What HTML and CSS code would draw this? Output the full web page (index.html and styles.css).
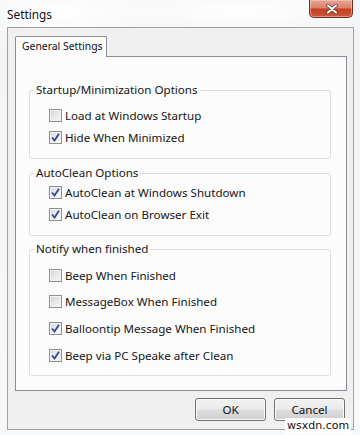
FILE: index.html
```html
<!DOCTYPE html>
<html>
<head>
<meta charset="utf-8">
<link rel="stylesheet" href="styles.css">
</head>
<body>
<div class="window">
  <div class="titlebar">
    <span class="title">Settings</span>
    <div class="close">
      <svg width="12" height="10" viewBox="0 0 12 10">
        <path d="M2 1.5 L10 8.5 M10 1.5 L2 8.5" stroke="#5a3a36" stroke-width="3.6" stroke-linecap="round" fill="none"/>
        <path d="M2 1.5 L10 8.5 M10 1.5 L2 8.5" stroke="#ffffff" stroke-width="2" stroke-linecap="round" fill="none"/>
      </svg>
    </div>
  </div>
  <div class="client">
    <div class="tabs">
      <div class="tab-strip"><div class="tab active">General Settings</div></div>
      <div class="tab-page">
        <fieldset class="group g1">
          <legend>Startup/Minimization Options</legend>
          <label class="row"><span class="cb"></span>Load at Windows Startup</label>
          <label class="row"><span class="cb checked"><svg width="11" height="11" viewBox="0 0 11 11"><path d="M2 5.5 L4.5 8.5 L9 1.8" stroke="#34468a" stroke-width="1.8" fill="none"/></svg></span>Hide When Minimized</label>
        </fieldset>
        <fieldset class="group g2">
          <legend>AutoClean Options</legend>
          <label class="row"><span class="cb checked"><svg width="11" height="11" viewBox="0 0 11 11"><path d="M2 5.5 L4.5 8.5 L9 1.8" stroke="#34468a" stroke-width="1.8" fill="none"/></svg></span>AutoClean at Windows Shutdown</label>
          <label class="row"><span class="cb checked"><svg width="11" height="11" viewBox="0 0 11 11"><path d="M2 5.5 L4.5 8.5 L9 1.8" stroke="#34468a" stroke-width="1.8" fill="none"/></svg></span>AutoClean on Browser Exit</label>
        </fieldset>
        <fieldset class="group g3">
          <legend>Notify when finished</legend>
          <label class="row"><span class="cb"></span>Beep When Finished</label>
          <label class="row"><span class="cb"></span>MessageBox When Finished</label>
          <label class="row"><span class="cb checked"><svg width="11" height="11" viewBox="0 0 11 11"><path d="M2 5.5 L4.5 8.5 L9 1.8" stroke="#34468a" stroke-width="1.8" fill="none"/></svg></span>Balloontip Message When Finished</label>
          <label class="row"><span class="cb checked"><svg width="11" height="11" viewBox="0 0 11 11"><path d="M2 5.5 L4.5 8.5 L9 1.8" stroke="#34468a" stroke-width="1.8" fill="none"/></svg></span>Beep via PC Speake after Clean</label>
        </fieldset>
      </div>
    </div>
    <div class="buttons">
      <button class="btn">OK</button>
      <button class="btn">Cancel</button>
    </div>
  </div>
  <div class="watermark">wsxdn.com</div>
</div>
</body>
</html>
```

FILE: styles.css
```css
html, body {
  margin: 0;
  padding: 0;
}
body {
  width: 360px;
  height: 435px;
  overflow: hidden;
  font-family: "Noto Sans", "Open Sans", sans-serif;
  font-size: 11.6px;
  color: #1a1a1a;
  background:
    radial-gradient(ellipse 120px 40px at 60px 12px, #ffffff 0%, rgba(255,255,255,0) 100%),
    radial-gradient(ellipse 160px 30px at 240px 10px, #ffffff 0%, rgba(255,255,255,0) 100%),
    linear-gradient(#f1f3f5, #f7f8f9);
}
.window {
  position: relative;
  width: 360px;
  height: 435px;
}
.titlebar {
  height: 27px;
  display: flex;
  justify-content: space-between;
  align-items: flex-start;
}
.title {
  padding: 7px 0 0 7px;
  font-size: 11.8px;
  line-height: 15px;
  color: #111;
}
.close {
  width: 44px;
  height: 18px;
  box-sizing: border-box;
  margin-right: 7px;
  border: 1px solid #7a2a1c;
  border-top: none;
  border-radius: 0 0 5px 5px;
  background: linear-gradient(#e6a594 0%, #da826c 45%, #c4401f 55%, #cf583d 100%);
  box-shadow: inset 0 0 0 1px rgba(255,220,210,0.45);
  display: flex;
  align-items: center;
  justify-content: center;
  padding-left: 2px;
}
.client {
  margin-left: 7px;
  width: 347px;
  height: 403px;
  box-sizing: border-box;
  border: 1px solid #9da2a7;
  background: #f0f0f0;
  padding: 8px 6px 0 7px;
}
.tab-strip {
  display: flex;
  height: 20px;
}
.tab {
  position: relative;
  z-index: 1;
  height: 21px;
  box-sizing: border-box;
  width: 92px;
  border: 1px solid #898c95;
  border-bottom: none;
  border-radius: 2px 2px 0 0;
  background: #fcfcfc;
  line-height: 19px;
  padding-left: 6px;
  white-space: nowrap;
  font-size: 10.4px;
  color: #111;
}
.tab-page {
  height: 335px;
  box-sizing: border-box;
  border: 1px solid #898c95;
  background: #fcfcfc;
  padding: 26px 15px 0 13px;
}
.group {
  margin: 0;
  border: 1px solid #d5dfe5;
  border-radius: 3px;
  padding: 0 0 10px 19px;
  min-width: 0;
}
.group legend {
  margin-left: -15px;
  padding: 0 2px;
  line-height: 14px;
  color: #151515;
}
.g1 { padding-top: 7px; }
.g2 { margin-top: 7px; padding-top: 1px; }
.g3 { margin-top: 6px; padding-top: 6px; padding-bottom: 6px; }
.row {
  display: flex;
  align-items: center;
  height: 22px;
  gap: 3px;
  color: #151515;
}
.g3 .row { height: 26.67px; }
.cb {
  width: 13px;
  height: 13px;
  box-sizing: border-box;
  border: 1px solid #8e8f8f;
  background: linear-gradient(135deg, #cfd2d6 0%, #e8e9ea 55%, #f8f8f8 100%);
  box-shadow: inset 0 0 0 1px #f2f2f2;
  display: flex;
  align-items: center;
  justify-content: center;
  flex: none;
}
.cb.checked {
  background: linear-gradient(135deg, #d7d9e6 0%, #eeeff4 60%, #fbfbfd 100%);
}
.buttons {
  display: flex;
  justify-content: flex-end;
  gap: 8px;
  margin-top: 7px;
  padding-right: 2px;
}
.btn {
  width: 71px;
  height: 23px;
  box-sizing: border-box;
  border: 1px solid #707070;
  border-radius: 3px;
  background: linear-gradient(#f2f2f2 0%, #ebebeb 48%, #dddddd 52%, #cfcfcf 100%);
  box-shadow: inset 0 0 0 1px #fbfbfb;
  font-family: "Noto Sans", "Open Sans", sans-serif;
  font-size: 11.6px;
  color: #111;
  padding: 0;
}
.watermark {
  position: absolute;
  left: 285px;
  top: 418px;
  padding: 0 2px;
  background: #ffffff;
  font-family: "DejaVu Sans", sans-serif;
  font-size: 11px;
  line-height: 16px;
  color: #111;
}
```
